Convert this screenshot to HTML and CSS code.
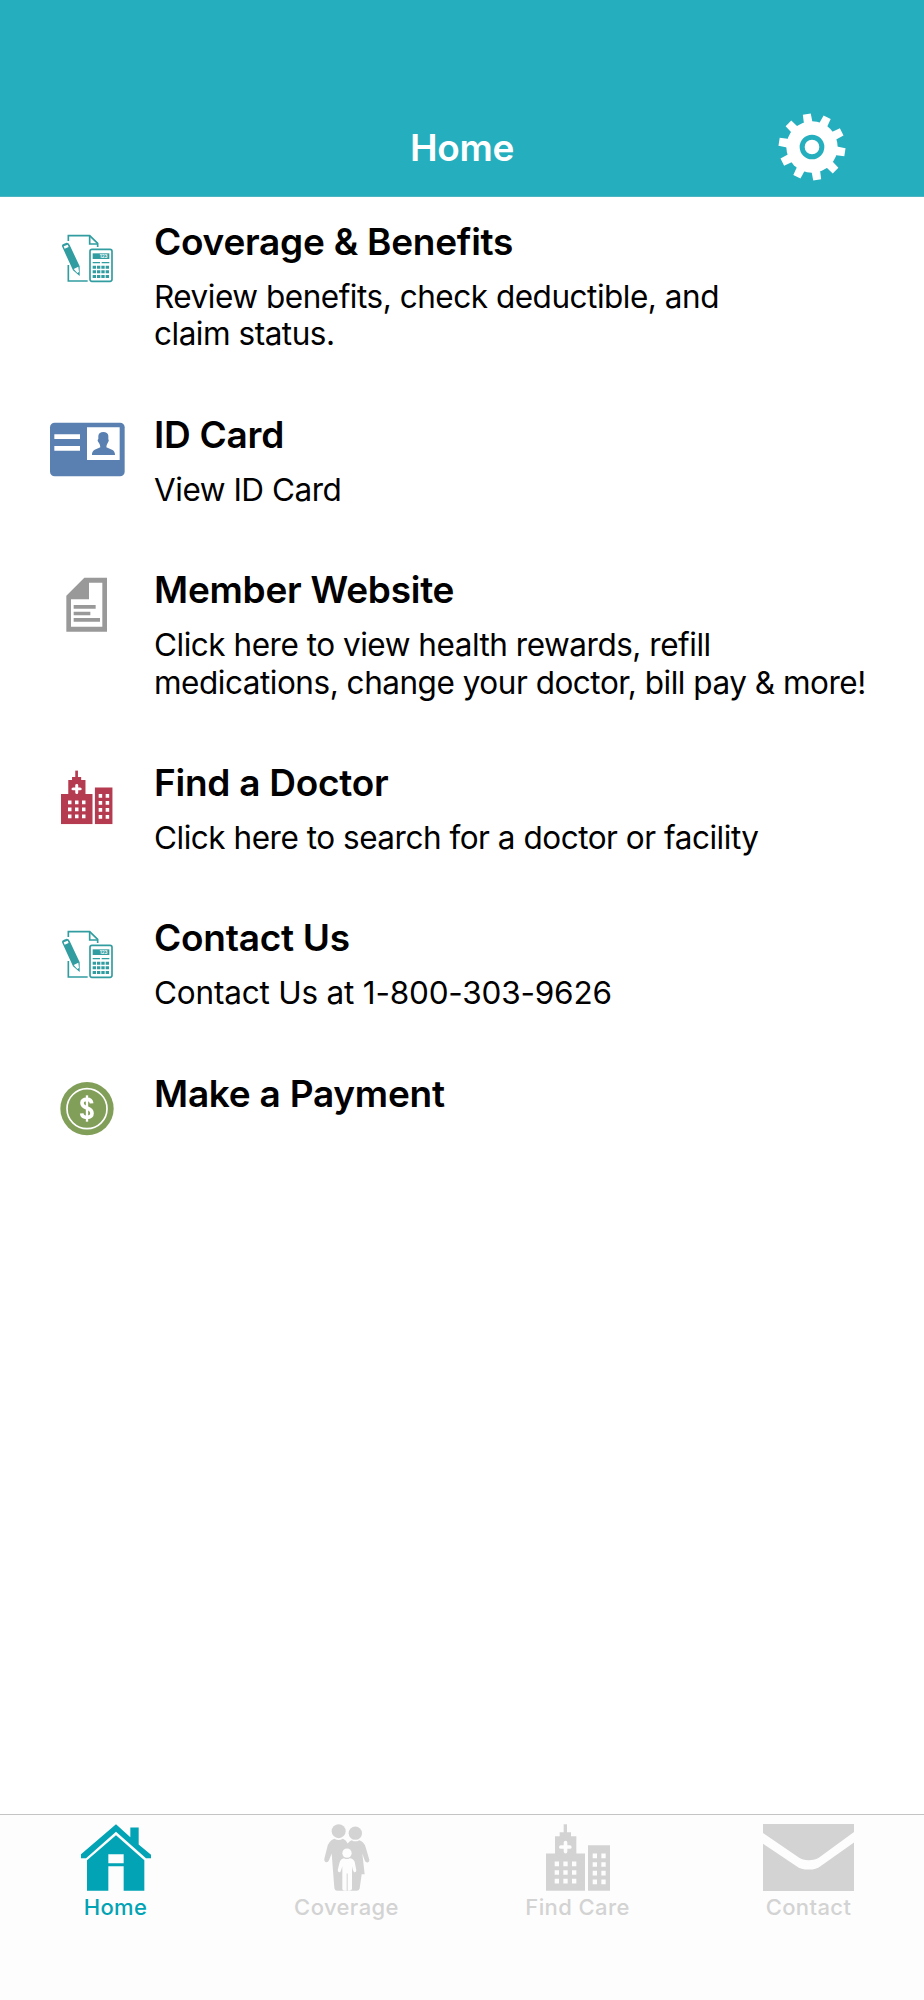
FILE: index.html
```html
<!DOCTYPE html>
<html lang="en">
<head>
<meta charset="utf-8">
<title>Home</title>
<link rel="stylesheet" href="styles.css">
</head>
<body>
<svg class="defs" width="0" height="0" aria-hidden="true">
  <defs>
    <symbol id="papers" viewBox="0 6 300 240">
      <g fill="none" stroke="#329da0" stroke-width="5">
        <path d="M85 78V62H149L173 85V96M85 150V198H143"/>
        <path d="M149 62V87H173"/>
        <rect x="150" y="103" width="66" height="96" rx="6"/>
      </g>
      <g fill="#329da0">
        <path d="M66 94Q65 88 72 86L80 83Q86 83 89 90L119 154V183L99 166Z"/>
        <rect x="158" y="115" width="50" height="17"/>
        <path d="M158 141h22v4h-22zM185 141h23v4h-23z"/>
        <path d="M158 152h10v9h-10zM171 152h10v9h-10zM184 152h10v9h-10zM197 152h10v9h-10zM158 166h10v9h-10zM171 166h10v9h-10zM184 166h10v9h-10zM197 166h10v9h-10zM158 180h10v9h-10zM171 180h10v9h-10zM184 180h10v9h-10zM197 180h10v9h-10z"/>
      </g>
      <path d="M71 94L83 89L86 96L74 101ZM101 162L115 155L117 171L112 174Z" fill="#fff"/>
      <text x="179" y="129" font-size="14" font-weight="700" fill="#fff" class="digits">123</text>
    </symbol>
    <symbol id="hospital" viewBox="0 0 192 200">
      <path fill="currentColor" fill-rule="evenodd" d="M53 0H63V24H75V36H91V88H117V200H0V88H27V36H41V24H53ZM53 55V63H45Q39 63 39 69Q39 74 45 74H53V82Q53 88 59 88Q64 88 64 82V74H71Q77 74 77 69Q77 63 71 63H64V55Q64 50 59 50Q53 50 53 55ZM26 112V126H39V112ZM52 112V126H65V112ZM78 112V126H91V112ZM26 138V152H39V138ZM52 138V152H65V138ZM78 138V152H91V138ZM26 164V178H39V164ZM52 164V178H65V164ZM78 164V178H91V164ZM126 63H192V200H126ZM140 88V102H153V88ZM166 88V102H179V88ZM140 114V128H153V114ZM166 114V128H179V114ZM140 140V154H153V140ZM166 140V154H179V140ZM140 166V180H153V166ZM166 166V180H179V166Z"/>
    </symbol>
  </defs>
</svg>

<header class="header">
  <h1 class="header-title">Home</h1>
  <svg class="gear" viewBox="-102 -102 204 204">
    <g fill="#fff">
      <circle r="77"/>
      <path id="tooth" d="M-13-70L-12-100H12L13-70Z" transform="rotate(-9)"/>
      <use href="#tooth" transform="rotate(36)"/>
      <use href="#tooth" transform="rotate(72)"/>
      <use href="#tooth" transform="rotate(108)"/>
      <use href="#tooth" transform="rotate(144)"/>
      <use href="#tooth" transform="rotate(180)"/>
      <use href="#tooth" transform="rotate(216)"/>
      <use href="#tooth" transform="rotate(252)"/>
      <use href="#tooth" transform="rotate(288)"/>
      <use href="#tooth" transform="rotate(324)"/>
    </g>
    <circle r="29.5" fill="none" stroke="#25aebd" stroke-width="15"/>
  </svg>
</header>

<main class="menu">
  <section class="item">
    <svg class="item-icon"><use href="#papers"/></svg>
    <div class="item-text">
      <h2 class="item-title">Coverage &amp; Benefits</h2>
      <p class="item-desc">Review benefits, check deductible, and<br>claim status.</p>
    </div>
  </section>
  <section class="item">
    <svg class="item-icon" viewBox="0 0 300 240">
      <rect x="30" y="38" width="224" height="161" rx="14" fill="#5980b1"/>
      <path fill="#fff" d="M43 73H120V87H43ZM43 108H120V122H43ZM141 52H239V150H141Z"/>
      <path fill="#5980b1" d="M156 135Q155 124 164 119L181 112Q182 107 177 99Q170 92 175 87V77Q177 66 190 66Q203 66 205 77V87Q209 92 203 99Q198 107 199 112L216 119Q225 123 225 135Z"/>
    </svg>
    <div class="item-text">
      <h2 class="item-title">ID Card</h2>
      <p class="item-desc">View ID Card</p>
    </div>
  </section>
  <section class="item">
    <svg class="item-icon" viewBox="0 1 300 240">
      <path fill="#999" fill-rule="evenodd" d="M133 39H201V201H79V93ZM147 54V104H93V186H187V54Z"/>
      <path fill="#999" d="M101 121H167V132H101ZM101 141H151V152H101ZM101 160H180V171H101Z"/>
    </svg>
    <div class="item-text">
      <h2 class="item-title">Member Website</h2>
      <p class="item-desc">Click here to view health rewards, refill<br>medications, change your doctor, bill pay &amp; more!</p>
    </div>
  </section>
  <section class="item">
    <svg class="item-icon hospital-red" viewBox="0 -5 300 240"><use href="#hospital" x="63" y="32" width="155" height="162"/></svg>
    <div class="item-text">
      <h2 class="item-title">Find a Doctor</h2>
      <p class="item-desc">Click here to search for a doctor or facility</p>
    </div>
  </section>
  <section class="item">
    <svg class="item-icon"><use href="#papers"/></svg>
    <div class="item-text">
      <h2 class="item-title">Contact Us</h2>
      <p class="item-desc phone">Contact Us at 1-800-303-9626</p>
    </div>
  </section>
  <section class="item">
    <svg class="item-icon" viewBox="0 -3 300 240">
      <circle cx="141" cy="116" r="80" fill="#829f5a"/>
      <circle cx="141" cy="116" r="60" fill="none" stroke="#fff" stroke-width="5"/>
      <path d="M155 100Q154 88 141 88Q126 88 126 99Q126 109 141 114Q156 119 156 130Q156 142 141 142Q126 142 125 130" fill="none" stroke="#fff" stroke-width="11"/>
      <path d="M141 76V155" fill="none" stroke="#fff" stroke-width="7"/>
    </svg>
    <div class="item-text">
      <h2 class="item-title">Make a Payment</h2>
    </div>
  </section>
</main>

<nav class="tabs">
  <a class="tab active">
    <svg class="tab-icon" width="70" height="67" viewBox="0 0 210 200">
      <path fill="currentColor" d="M105 0L148 39V10H173V61L210 92V102H195L105 23L15 102H0V90Z"/>
      <path fill="currentColor" fill-rule="evenodd" d="M105 33L190 108V200H128V126H82V200H18V108ZM82 90V117H128V90Z"/>
    </svg>
    <span class="tab-label">Home</span>
  </a>
  <a class="tab">
    <svg class="tab-icon" width="46" height="67" viewBox="0 0 138 200">
      <g fill="currentColor">
        <circle cx="44" cy="21" r="21"/>
        <circle cx="94" cy="27" r="20"/>
        <path d="M31 44Q44 51 57 44Q66 47 71 58Q76 50 83 48Q94 55 106 48Q120 52 125 69L136 107Q137 114 131 115Q125 116 122 108L115 88L122 150H113L107 193Q105 200 98 200H40Q32 200 31 191L23 88L15 108Q12 115 6 114Q0 113 1 104L9 72Q14 49 31 44Z"/>
      </g>
      <g fill="#fdfdfd">
        <circle cx="69" cy="87" r="14"/>
        <path d="M60 102Q69 107 77 102Q88 103 92 113L97 138Q97 145 91 144Q88 143 86 135L84 126V194Q83 200 76 200H62Q55 200 55 194V126L52 136Q50 145 45 144Q40 143 42 134L47 114Q50 103 60 102Z"/>
      </g>
      <path d="M69.500 148V200" stroke="currentColor" stroke-width="3"/>
    </svg>
    <span class="tab-label">Coverage</span>
  </a>
  <a class="tab">
    <svg class="tab-icon" width="64" height="67"><use href="#hospital"/></svg>
    <span class="tab-label">Find Care</span>
  </a>
  <a class="tab">
    <svg class="tab-icon" width="91" height="67" viewBox="0 0 274 200" preserveAspectRatio="none">
      <path fill="currentColor" d="M0 0H274V24L168 101Q158 108 137 108Q119 108 109 101L0 27ZM0 59L101 126Q113 136 138 136Q161 136 173 126L274 55V200H0Z"/>
    </svg>
    <span class="tab-label">Contact</span>
  </a>
</nav>
</body>
</html>
```

FILE: styles.css
```css
* { box-sizing: border-box; }

body {
  margin: 0;
  min-height: 2000px;
  display: flex;
  flex-direction: column;
  background: #fff;
  color: #000;
  font-family: Inter, "Liberation Sans", sans-serif;
}

h1, h2, p { margin: 0; }

.defs { display: block; flex: none; }

.header {
  height: 197px;
  padding: 98px 78px 0;
  display: grid;
  grid-template-columns: 68px 1fr 68px;
  align-items: center;
  background: #25aebd;
  border-bottom: 1px solid #4cb5c1;
}

.header-title {
  grid-column: 2;
  margin-top: 2px;
  color: #fff;
  font-size: 37px;
  line-height: 44px;
  font-weight: 600;
  letter-spacing: -0.3px;
  text-align: center;
}

.gear { width: 68px; height: 68px; }

.menu { flex: 1; }

.item {
  display: flex;
  gap: 14px;
  padding: 20px 40px 0;
  margin-bottom: 37px;
}

.item-icon { width: 100px; height: 80px; flex: none; }

.digits { font-family: Inter, sans-serif; }

.hospital-red { color: #b53c50; }

.item-text { white-space: nowrap; }

.item-title {
  margin-top: 2px;
  font-size: 37px;
  line-height: 46px;
  font-weight: 600;
  letter-spacing: -0.25px;
}

.item-desc {
  margin-top: 13px;
  font-size: 31.500px;
  line-height: 37.400px;
  letter-spacing: -0.480px;
}

.phone { letter-spacing: -0.2px; }

.tabs {
  height: 186px;
  padding-top: 9px;
  display: grid;
  grid-template-columns: repeat(4, 1fr);
  align-items: start;
  background: #fdfdfd;
  border-top: 1px solid #c4c4c4;
}

.tab {
  display: flex;
  flex-direction: column;
  align-items: center;
  color: #d3d3d3;
}

.tab.active { color: #02a3b4; }

.tab-icon { display: block; }

.tab-label {
  margin-top: 2px;
  font-size: 22px;
  line-height: 28px;
  font-weight: 500;
  letter-spacing: 0.4px;
}
```
